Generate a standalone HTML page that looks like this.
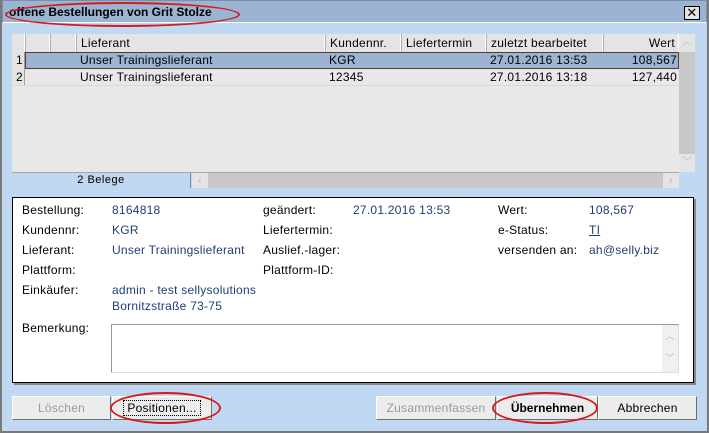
<!DOCTYPE html>
<html><head><style>
*{margin:0;padding:0;box-sizing:border-box}
body{width:709px;height:433px;background:#c0d8f2;font-family:"Liberation Sans",sans-serif;font-size:12px;color:#000;position:relative;overflow:hidden;letter-spacing:.25px}
.a{position:absolute;white-space:nowrap}
.v{color:#1f3f72}
.btn{position:absolute;top:396px;height:24px;background:#ececec;border:1px solid #fff;border-right-color:#707070;border-bottom-color:#707070;text-align:center;line-height:22px}
.dis{color:#9a9a9a}
.ell{position:absolute;border:2px solid #d41c1c;border-radius:50%}
.hd{position:absolute;top:34px;height:18px;background:#e4e4e4;border-right:1px solid #fff;border-left:1px solid #b0b0b0;line-height:18px;padding-left:4px}
.c{position:absolute;line-height:16px;padding-left:4px}
</style></head><body>
<div class="a" style="left:0;top:0;width:709px;height:433px;border:2px solid #7a7a7a;border-top:none"></div>
<div class="a" style="left:2px;top:0;width:705px;height:23px;background:#9ab4d2;border:1px solid #7a90a8;border-bottom-color:#fff"></div>
<div class="a" style="left:9px;top:5px;font-weight:bold;font-size:12px;letter-spacing:0">offene Bestellungen von Grit Stolze</div>
<div class="a" style="left:684px;top:6px;width:16px;height:14px;background:#e4e4e4;border:1px solid #000;text-align:center;line-height:12px;font-size:13px">✕</div>
<div class="ell" style="left:5px;top:2px;width:235px;height:25px"></div>

<div class="a" style="left:12px;top:34px;width:683px;height:138px;background:#e8e8e8"></div>
<div class="hd" style="left:12px;width:13px;border-left:none"></div>
<div class="hd" style="left:25px;width:25px"></div>
<div class="hd" style="left:50px;width:26px"></div>
<div class="hd" style="left:76px;width:249px">Lieferant</div>
<div class="hd" style="left:325px;width:76px">Kundennr.</div>
<div class="hd" style="left:401px;width:85px">Liefertermin</div>
<div class="hd" style="left:486px;width:117px">zuletzt bearbeitet</div>
<div class="hd" style="left:603px;width:76px;text-align:right;padding-right:3px">Wert</div>
<div class="a" style="left:25px;top:52px;width:654px;height:17px;background:#9ab4d2;border:1px solid #5a3a28"></div>
<div class="a" style="left:12px;top:52px;width:13px;height:33px;background:#e4e4e4;border-right:1px solid #a0a0a0"></div>
<div class="c" style="left:12px;top:52px">1</div><div class="c" style="left:12px;top:69px">2</div>
<div class="c" style="left:76px;top:52px">Unser Trainingslieferant</div>
<div class="c" style="left:325px;top:52px">KGR</div>
<div class="c" style="left:486px;top:52px">27.01.2016 13:53</div>
<div class="c" style="left:603px;top:52px;width:74px;text-align:right">108,567</div>
<div class="c" style="left:76px;top:69px">Unser Trainingslieferant</div>
<div class="c" style="left:325px;top:69px">12345</div>
<div class="c" style="left:486px;top:69px">27.01.2016 13:18</div>
<div class="c" style="left:603px;top:69px;width:74px;text-align:right">127,440</div>
<div class="a" style="left:12px;top:85px;width:667px;height:1px;background:#d8d8d8"></div>
<div class="a" style="left:679px;top:34px;width:16px;height:138px;background:#c8c8c8"></div>
<div class="a" style="left:679px;top:34px;width:16px;height:18px;background:#e4e4e4;color:#bbb;text-align:center;font-size:10px;line-height:18px">︿</div>
<div class="a" style="left:679px;top:154px;width:16px;height:18px;background:#e4e4e4;color:#bbb;text-align:center;font-size:10px;line-height:18px">﹀</div>
<div class="a" style="left:12px;top:172px;width:667px;height:1px;background:#a8a8a8"></div>
<div class="a" style="left:12px;top:173px;width:179px;height:15px;background:#c0d8f2;border-right:1px solid #888;text-align:center;font-size:11px;line-height:15px;letter-spacing:.5px">2 Belege</div>
<div class="a" style="left:192px;top:173px;width:487px;height:15px;background:#c8c8c8"></div>
<div class="a" style="left:192px;top:173px;width:16px;height:15px;background:#e4e4e4;color:#bbb;text-align:center;line-height:14px">‹</div>
<div class="a" style="left:663px;top:173px;width:16px;height:15px;background:#e4e4e4;color:#bbb;text-align:center;line-height:14px">›</div>

<div class="a" style="left:14px;top:199px;width:682px;height:186px;background:#888"></div>
<div class="a" style="left:12px;top:197px;width:682px;height:186px;background:#fff;border:1px solid #000"></div>
<div class="a" style="left:22px;top:203px">Bestellung:</div><div class="a v" style="left:112px;top:203px">8164818</div>
<div class="a" style="left:22px;top:223px">Kundennr:</div><div class="a v" style="left:112px;top:223px">KGR</div>
<div class="a" style="left:22px;top:243px">Lieferant:</div><div class="a v" style="left:112px;top:243px">Unser Trainingslieferant</div>
<div class="a" style="left:22px;top:263px">Plattform:</div>
<div class="a" style="left:22px;top:283px">Einkäufer:</div><div class="a v" style="left:112px;top:283px">admin - test sellysolutions</div>
<div class="a v" style="left:112px;top:299px">Bornitzstraße 73-75</div>
<div class="a" style="left:263px;top:203px">geändert:</div><div class="a v" style="left:353px;top:203px">27.01.2016 13:53</div>
<div class="a" style="left:263px;top:223px">Liefertermin:</div>
<div class="a" style="left:263px;top:243px">Auslief.-lager:</div>
<div class="a" style="left:263px;top:263px">Plattform-ID:</div>
<div class="a" style="left:498px;top:203px">Wert:</div><div class="a v" style="left:589px;top:203px">108,567</div>
<div class="a" style="left:498px;top:223px">e-Status:</div><div class="a v" style="left:589px;top:223px;text-decoration:underline">TI</div>
<div class="a" style="left:498px;top:243px">versenden an:</div><div class="a v" style="left:589px;top:243px">ah@selly.biz</div>
<div class="a" style="left:22px;top:321px">Bemerkung:</div>
<div class="a" style="left:111px;top:324px;width:568px;height:49px;background:#fff;border:1px solid #999;border-right-color:#ddd;border-bottom-color:#ddd"></div>
<div class="a" style="left:662px;top:325px;width:16px;height:47px;background:#f0f0f0;color:#bbb;font-size:9px;text-align:center;line-height:22px">︿<br>﹀</div>

<div class="btn dis" style="left:12px;width:99px">Löschen</div>
<div class="btn" style="left:112px;width:100px"><span style="outline:1px dotted #000;padding:0 3px">Positionen...</span></div>
<div class="btn dis" style="left:376px;width:120px">Zusammenfassen</div>
<div class="btn" style="left:497px;width:101px;font-weight:bold;letter-spacing:0">Übernehmen</div>
<div class="btn" style="left:598px;width:99px">Abbrechen</div>
<div class="ell" style="left:110px;top:392px;width:111px;height:32px"></div>
<div class="ell" style="left:492px;top:392px;width:106px;height:32px"></div>
</body></html>
